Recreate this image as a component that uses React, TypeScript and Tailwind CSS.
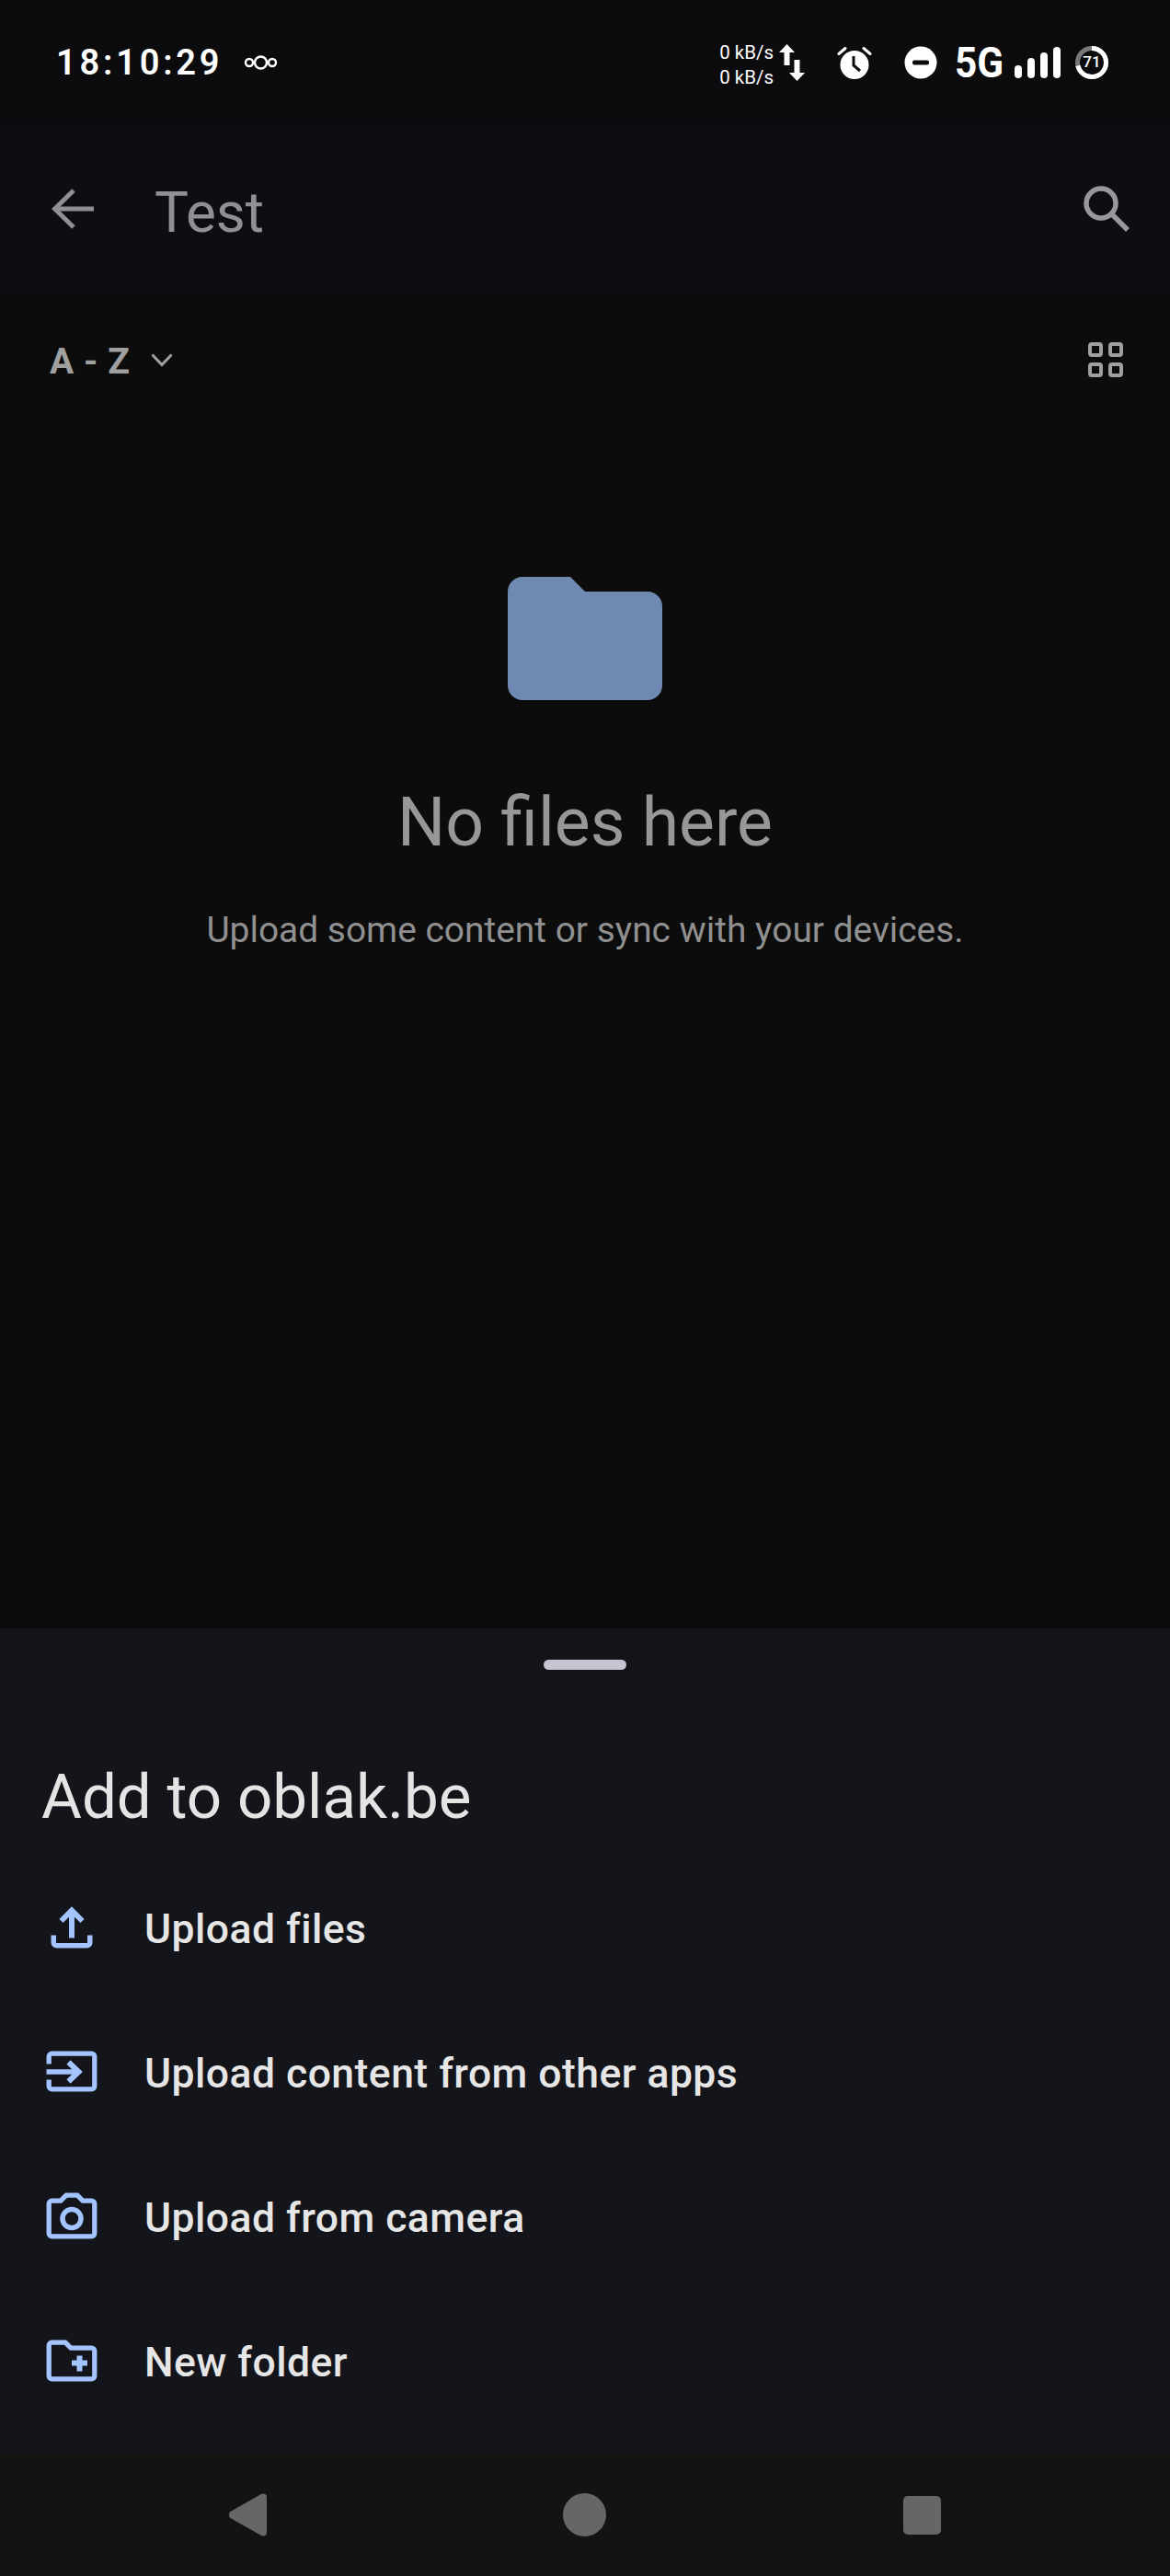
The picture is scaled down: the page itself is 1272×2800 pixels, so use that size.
import React from "react";

const Blue = "#a4c4ff";

function Row({ icon, label }: { icon: React.ReactNode; label: string }) {
  return (
    <div className="flex h-[157px] items-center">
      <div className="-mt-[4px] w-[157px] shrink-0 pl-[47px]">{icon}</div>
      <span className="text-[44.5px] font-medium leading-none tracking-[0.45px] text-[#e6e6e6]">{label}</span>
    </div>
  );
}

function UploadIcon() {
  return (
    <svg className="block" width="62" height="62" viewBox="0 0 62 62" fill="none" stroke={Blue} strokeWidth="5.5">
      <path d="M31 42.500V13" strokeWidth="6" />
      <path d="M19.500 24L31 12.500 42.500 24" strokeWidth="6" />
      <path d="M11.250 39.500V47.500a3.300 3.300 0 0 0 3.300 3.300h32.900a3.300 3.300 0 0 0 3.300-3.300V39.500" />
    </svg>
  );
}
function ShareIcon() {
  return (
    <svg className="block" width="62" height="62" viewBox="0 0 62 62" fill="none" stroke={Blue} strokeWidth="5.300">
      <path d="M6.200 22.500V14.500a3.300 3.300 0 0 1 3.300-3.300h43a3.300 3.300 0 0 1 3.300 3.300v32a3.300 3.300 0 0 1-3.300 3.300h-43a3.300 3.300 0 0 1-3.300-3.300V39.500" />
      <path d="M3.500 31H38" strokeWidth="5.500" />
      <path d="M27.500 20.500L38.500 31 27.500 41.500" strokeWidth="6" />
    </svg>
  );
}
function CameraIcon() {
  return (
    <svg className="block" width="62" height="62" viewBox="0 0 62 62" fill="none" stroke={Blue} strokeWidth="5.300">
      <path d="M9.500 14.200h9.500l6-6h12l6 6h9.500a3.300 3.300 0 0 1 3.300 3.300v32a3.300 3.300 0 0 1-3.300 3.300h-43a3.300 3.300 0 0 1-3.300-3.300v-32a3.300 3.300 0 0 1 3.300-3.300z" />
      <circle cx="31" cy="33.500" r="10" strokeWidth="5.500" />
    </svg>
  );
}
function FolderPlusIcon() {
  return (
    <svg className="block" width="62" height="62" viewBox="0 0 62 62" fill="none" stroke={Blue} strokeWidth="5.300">
      <path d="M9.500 11.200h14.500l6 6h22.500a3.300 3.300 0 0 1 3.300 3.300v27a3.300 3.300 0 0 1-3.300 3.300h-43a3.300 3.300 0 0 1-3.300-3.300v-33a3.300 3.300 0 0 1 3.300-3.300z" />
      <path d="M31 33.500h17M39.500 25.500v17" strokeWidth="6" />
    </svg>
  );
}

function StatusBar() {
  return (
    <div className="flex h-[135px] shrink-0 items-center justify-between bg-[#0c0c0e] pl-[61px] pr-[67px] text-white">
      <div className="flex items-center">
        <span className="text-[38px] font-semibold leading-none tracking-[3.8px]">18:10:29</span>
        <svg className="ml-[23px]" width="37" height="16" viewBox="0 0 37 16" fill="none" stroke="#fff" strokeWidth="2.400">
          <circle cx="6" cy="8" r="4" />
          <circle cx="18.500" cy="8" r="6.500" />
          <circle cx="31" cy="8" r="4" />
        </svg>
      </div>
      <div className="flex items-center">
        <div className="mt-[6px] flex flex-col text-[20.5px] leading-[27px]">
          <span>0 kB/s</span>
          <span>0 kB/s</span>
        </div>
        <svg className="ml-[6px]" width="28" height="40" viewBox="0 0 28 40" fill="#fff">
          <path d="M8.500 0L17 9h-5.500v14h-6V9H0z" />
          <path d="M19.500 40L28 31h-5.500V17h-6v14H11z" />
        </svg>
        <svg className="ml-[35px]" width="38" height="36" viewBox="0 0 38 36" fill="#fff">
          <circle cx="19" cy="20.500" r="15.500" />
          <path d="M2 8.500L9 2.500" stroke="#fff" strokeWidth="3" strokeLinecap="round" />
          <path d="M36 8.500L29 2.500" stroke="#fff" strokeWidth="3" strokeLinecap="round" />
          <path d="M18 11v10l7 6" fill="none" stroke="#0c0c0e" strokeWidth="3" />
        </svg>
        <svg className="ml-[35px]" width="36" height="36" viewBox="0 0 36 36">
          <circle cx="18" cy="18" r="17.500" fill="#fff" />
          <rect x="9" y="15.500" width="18" height="5" rx="2" fill="#0c0c0e" />
        </svg>
        <span className="ml-[19px] inline-block w-[50px] origin-left scale-x-[0.92] whitespace-nowrap text-[46px] font-bold leading-none">5G</span>
        <div className="ml-[15px] flex h-[34px] items-end gap-[6px]">
          <div className="h-[14px] w-[8px] rounded-full bg-white" />
          <div className="h-[22px] w-[8px] rounded-full bg-white" />
          <div className="h-[28px] w-[8px] rounded-full bg-white" />
          <div className="h-[34px] w-[8px] rounded-full bg-white" />
        </div>
        <div className="relative ml-[16px] flex h-[36px] w-[36px] items-center justify-center">
          <svg className="absolute inset-0" width="36" height="36" viewBox="0 0 36 36" fill="none" strokeWidth="5">
            <circle cx="18" cy="18" r="15.500" stroke="#7a7a7a" />
            <circle cx="18" cy="18" r="15.500" stroke="#fff" strokeDasharray="69.100 97.400" transform="rotate(-90 18 18)" />
          </svg>
          <span className="relative text-[17px] font-medium leading-none">71</span>
        </div>
      </div>
    </div>
  );
}

function AppBar() {
  return (
    <div className="flex h-[183px] shrink-0 items-center bg-[#0c0e13] pl-[56px] pr-[44px]">
      <svg width="46" height="44" viewBox="0 0 46 44" fill="none" stroke="#8f8f94" strokeWidth="5">
        <path d="M46 22H4" />
        <path d="M24 2L3.500 22 24 42" />
      </svg>
      <span className="ml-[66px] mt-[8px] text-[62px] leading-none text-[#8f8f94]">Test</span>
      <svg className="ml-auto" width="50" height="50" viewBox="0 0 50 50" fill="none" stroke="#98989b" strokeWidth="5.500">
        <circle cx="19" cy="19" r="16" />
        <path d="M30.500 30.500L48 48" />
      </svg>
    </div>
  );
}

function SortRow() {
  return (
    <div className="flex h-[148px] items-center pl-[54px] pr-[51px] pt-[3px]">
      <span className="text-[39px] font-bold leading-none tracking-[0.6px] text-[#a0a0a0]">A - Z</span>
      <svg className="ml-[22px] -mt-[5px]" width="24" height="15" viewBox="0 0 24 15" fill="none" stroke="#a0a0a0" strokeWidth="3">
        <path d="M1.500 1.500L12 12.500 22.500 1.500" />
      </svg>
      <div className="ml-auto -mt-[6px] grid grid-cols-2 gap-[6px]">
        <div className="h-[16px] w-[16px] rounded-[4px] border-[4px] border-[#a0a0a0]" />
        <div className="h-[16px] w-[16px] rounded-[4px] border-[4px] border-[#a0a0a0]" />
        <div className="h-[16px] w-[16px] rounded-[4px] border-[4px] border-[#a0a0a0]" />
        <div className="h-[16px] w-[16px] rounded-[4px] border-[4px] border-[#a0a0a0]" />
      </div>
    </div>
  );
}

function Empty() {
  return (
    <div className="flex flex-col items-center pt-[161px]">
      <svg width="168" height="134" viewBox="0 0 168 134">
        <path d="M16 0h52l16 16h68a16 16 0 0 1 16 16v86a16 16 0 0 1-16 16H16a16 16 0 0 1-16-16V16A16 16 0 0 1 16 0z" fill="#7089b0" />
      </svg>
      <div className="mt-[97px] text-[73.300px] leading-none text-[#979797]">No files here</div>
      <div className="mt-[61px] text-[38.900px] leading-none text-[#909090]">Upload some content or sync with your devices.</div>
    </div>
  );
}

function Sheet() {
  return (
    <div className="flex h-[897px] shrink-0 flex-col bg-[#13151b]">
      <div className="mx-auto mt-[34px] h-[11px] w-[90px] rounded-full bg-[#c8c3d0]" />
      <div className="ml-[45px] mt-[105px] text-[67.300px] leading-none text-[#e4e4e4]">Add to oblak.be</div>
      <div className="mt-[31px] flex flex-col">
        <Row icon={<UploadIcon />} label="Upload files" />
        <Row icon={<ShareIcon />} label="Upload content from other apps" />
        <Row icon={<CameraIcon />} label="Upload from camera" />
        <Row icon={<FolderPlusIcon />} label="New folder" />
      </div>
    </div>
  );
}

function NavBar() {
  return (
    <div className="flex h-[133px] shrink-0 items-center bg-[#131313] pl-[249px]">
      <svg width="41" height="47" viewBox="0 0 41 47" fill="#666">
        <path d="M1.500 20L35 1c3-1.500 6 0 6 3v39c0 3-3 4.500-6 3L1.500 27c-2-1-2-6 0-7z" />
      </svg>
      <div className="ml-[322px] h-[47px] w-[47px] rounded-full bg-[#666]" />
      <div className="ml-[323px] h-[42px] w-[41px] rounded-[5px] bg-[#666]" />
    </div>
  );
}

export default function App() {
  return (
    <div className="flex h-[2800px] w-[1272px] flex-col overflow-hidden bg-[#0c0c0d] font-['Roboto',sans-serif]">
      <StatusBar />
      <AppBar />
      <main className="flex-1">
        <SortRow />
        <Empty />
      </main>
      <Sheet />
      <NavBar />
    </div>
  );
}
